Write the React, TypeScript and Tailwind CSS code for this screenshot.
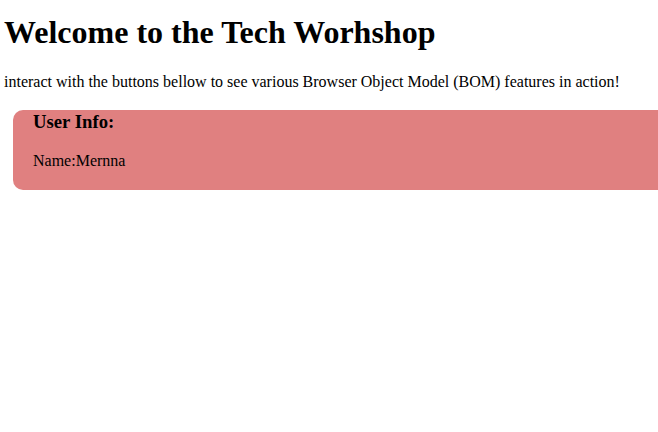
export default function App() {
  return (
    <div className="min-h-screen w-full overflow-hidden bg-white text-black font-['Liberation_Serif',_'Times_New_Roman',_serif]">
      <h1 className="ml-[4px] mt-[14px] mb-[22px] text-[32px] font-bold leading-[normal]">
        Welcome to the Tech Worhshop
      </h1>
      <p className="ml-[4px] text-[16px] leading-[normal]">
        interact with the buttons bellow to see various Browser Object Model (BOM) features in action!
      </p>
      <div className="mt-[19px] ml-[13px] w-[680px] rounded-[10px] bg-[#e08080] px-[20px] pt-[1px] pb-[20px]">
        <h3 className="mb-[19px] text-[18.72px] font-bold leading-[normal]">User Info:</h3>
        <p className="text-[16px] leading-[normal]">Name:Mernna</p>
      </div>
    </div>
  );
}
